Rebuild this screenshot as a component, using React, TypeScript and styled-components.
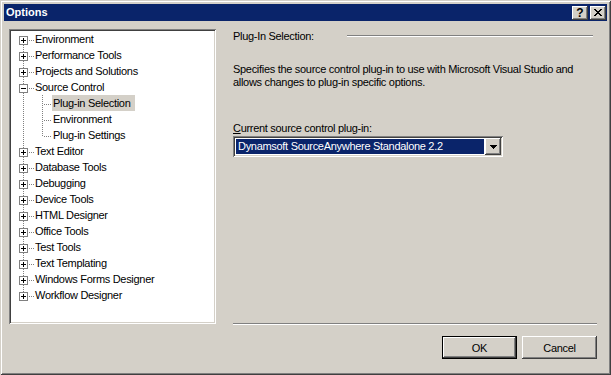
import * as React from "react";
import styled, { createGlobalStyle, css } from "styled-components";

const face = "#d4d0c8";
const shadow = "#808080";
const darkShadow = "#404040";
const highlight = "#ffffff";
const navy = "#0a246a";

const GlobalStyle = createGlobalStyle`
    html, body {
        margin: 0;
        padding: 0;
        background: ${face};
    }
    body {
        font-family: "Liberation Sans", Arial, sans-serif;
        font-size: 11px;
        letter-spacing: -0.3px;
        color: #000;
    }
    * {
        box-sizing: border-box;
    }
`;

// Classic 3D edges, drawn with inset shadows so they don't change the box size.
const raisedEdge = css`
    box-shadow: inset -1px -1px 0 ${darkShadow}, inset 1px 1px 0 ${highlight}, inset -2px -2px 0 ${shadow},
        inset 2px 2px 0 ${face};
`;

const sunkenEdge = css`
    box-shadow: inset 1px 1px 0 ${shadow}, inset -1px -1px 0 ${highlight}, inset 2px 2px 0 ${darkShadow},
        inset -2px -2px 0 ${face};
`;

const etchedRule = css`
    height: 2px;
    border-top: 1px solid ${shadow};
    border-bottom: 1px solid ${highlight};
`;

type TreeItem = {
    label: string;
    level: 0 | 1;
    expanded?: boolean;
    selected?: boolean;
};

const treeItems: TreeItem[] = [
    { label: "Environment", level: 0 },
    { label: "Performance Tools", level: 0 },
    { label: "Projects and Solutions", level: 0 },
    { label: "Source Control", level: 0, expanded: true },
    { label: "Plug-in Selection", level: 1, selected: true },
    { label: "Environment", level: 1 },
    { label: "Plug-in Settings", level: 1 },
    { label: "Text Editor", level: 0 },
    { label: "Database Tools", level: 0 },
    { label: "Debugging", level: 0 },
    { label: "Device Tools", level: 0 },
    { label: "HTML Designer", level: 0 },
    { label: "Office Tools", level: 0 },
    { label: "Test Tools", level: 0 },
    { label: "Text Templating", level: 0 },
    { label: "Windows Forms Designer", level: 0 },
    { label: "Workflow Designer", level: 0 },
];

const Window = styled.div`
    width: 611px;
    height: 375px;
    padding: 4px;
    background: ${face};
    display: flex;
    flex-direction: column;
    box-shadow: inset 1px 1px 0 ${face}, inset -1px -1px 0 ${darkShadow}, inset 2px 2px 0 ${highlight},
        inset -2px -2px 0 ${shadow};
`;

const TitleBar = styled.div`
    height: 17px;
    flex: none;
    display: flex;
    align-items: center;
    padding: 0 1px 0 2px;
    background: ${navy};
    color: #fff;
    font-weight: bold;
    font-size: 11px;
    letter-spacing: 0;
`;

const TitleText = styled.div`
    flex: 1;
    line-height: 17px;
`;

const CaptionButton = styled.div`
    width: 16px;
    height: 14px;
    margin-left: 2px;
    background: ${face};
    color: #000;
    display: flex;
    align-items: center;
    justify-content: center;
    font-size: 12px;
    font-weight: bold;
    line-height: 14px;
    ${raisedEdge}
`;

const Body = styled.div`
    display: grid;
    grid-template-columns: 207px 1fr;
    grid-template-rows: 295px auto;
    column-gap: 17px;
    row-gap: 12px;
    padding: 8px 10px 0 5px;
`;

const Tree = styled.div`
    background: #fff;
    padding: 2px;
    overflow: hidden;
    ${sunkenEdge}
`;

const TreeRow = styled.div`
    height: 16px;
    display: flex;
    align-items: stretch;
`;

const TreeGlyph = styled.svg`
    display: block;
    flex: none;
    shape-rendering: crispEdges;
`;

const TreeLabel = styled.span<{ $selected?: boolean }>`
    padding: 0 5px 0 1px;
    line-height: 16px;
    white-space: nowrap;
    background: ${(p) => (p.$selected ? face : "transparent")};
`;

const Page = styled.div`
    display: flex;
    flex-direction: column;
`;

const SectionHeader = styled.div`
    height: 14px;
    display: flex;
    align-items: center;
`;

const SectionTitle = styled.div`
    width: 114px;
    flex: none;
    line-height: 14px;
`;

const SectionRule = styled.div`
    flex: 1;
    margin-right: 4px;
    ${etchedRule}
`;

const Description = styled.div`
    margin-top: 20px;
    line-height: 13px;
    white-space: nowrap;
`;

const FieldLabel = styled.div`
    margin-top: 33px;
    line-height: 13px;
`;

const Combo = styled.div`
    margin-top: 1px;
    width: 270px;
    height: 21px;
    padding: 2px;
    background: #fff;
    display: flex;
    ${sunkenEdge}
`;

const ComboValue = styled.div`
    flex: 1;
    margin: 1px;
    padding-left: 2px;
    background: ${navy};
    color: #fff;
    line-height: 15px;
    white-space: nowrap;
    overflow: hidden;
`;

const ComboButton = styled.div`
    width: 16px;
    flex: none;
    background: ${face};
    display: flex;
    align-items: center;
    justify-content: center;
    ${raisedEdge}
`;

const BottomRule = styled.div`
    margin-top: auto;
    margin-bottom: -1px;
    ${etchedRule}
`;

const ButtonRow = styled.div`
    grid-column: 2;
    display: flex;
    justify-content: flex-end;
    gap: 5px;
`;

const PushButton = styled.div<{ $default?: boolean }>`
    width: 75px;
    height: 23px;
    background: ${face};
    display: flex;
    align-items: center;
    justify-content: center;
    border: ${(p) => (p.$default ? "1px solid #000" : "none")};
    ${raisedEdge}
`;

const Mnemonic = styled.span`
    text-decoration: underline;
`;

const dotsV = (x: number, from: number, to: number) => {
    const result: React.ReactElement[] = [];
    for (let y = from; y <= to; y += 2) {
        result.push(<rect key={`v${x}-${y}`} x={x} y={y} width={1} height={1} />);
    }
    return result;
};

const dotsH = (y: number, from: number, to: number) => {
    const result: React.ReactElement[] = [];
    for (let x = from; x <= to; x += 2) {
        result.push(<rect key={`h${y}-${x}`} x={x} y={y} width={1} height={1} />);
    }
    return result;
};

const RootGlyph = ({ first, last, expanded }: { first: boolean; last: boolean; expanded?: boolean }) => (
    <TreeGlyph width={23} height={16} viewBox="0 0 23 16">
        <g fill={shadow}>
            {!first && dotsV(12, 0, 4)}
            {!last && dotsV(12, 14, 15)}
            {dotsH(9, 18, 22)}
        </g>
        <rect x={8.5} y={5.5} width={8} height={8} fill="#fff" stroke={shadow} />
        <rect x={10} y={9} width={5} height={1} fill="#000" />
        {!expanded && <rect x={12} y={7} width={1} height={5} fill="#000" />}
    </TreeGlyph>
);

const ChildGlyph = ({ lastChild }: { lastChild: boolean }) => (
    <TreeGlyph width={41} height={16} viewBox="0 0 41 16">
        <g fill={shadow}>
            {dotsV(12, 0, 15)}
            {dotsV(31, 0, lastChild ? 9 : 15)}
            {dotsH(9, 33, 39)}
        </g>
    </TreeGlyph>
);

const CloseGlyph = () => {
    const rows = ["xx....xx", ".xx..xx.", "..xxxx..", "...xx...", "..xxxx..", ".xx..xx.", "xx....xx"];
    return (
        <svg width={8} height={7} viewBox="0 0 8 7" shapeRendering="crispEdges">
            {rows.flatMap((row, y) =>
                row.split("").map((c, x) => (c === "x" ? <rect key={`${x}-${y}`} x={x} y={y} width={1} height={1} /> : null))
            )}
        </svg>
    );
};

const DropArrow = () => (
    <svg width={7} height={4} viewBox="0 0 7 4" shapeRendering="crispEdges">
        <rect x={0} y={0} width={7} height={1} />
        <rect x={1} y={1} width={5} height={1} />
        <rect x={2} y={2} width={3} height={1} />
        <rect x={3} y={3} width={1} height={1} />
    </svg>
);

const OptionsTree = () => {
    const lastIndex = treeItems.length - 1;
    return (
        <Tree>
            {treeItems.map((item, i) => {
                const next = treeItems[i + 1];
                return (
                    <TreeRow key={i}>
                        {item.level === 0 ? (
                            <RootGlyph first={i === 0} last={i === lastIndex} expanded={item.expanded} />
                        ) : (
                            <ChildGlyph lastChild={!next || next.level !== 1} />
                        )}
                        <TreeLabel $selected={item.selected}>{item.label}</TreeLabel>
                    </TreeRow>
                );
            })}
        </Tree>
    );
};

const App = () => (
    <>
        <GlobalStyle />
        <Window>
            <TitleBar>
                <TitleText>Options</TitleText>
                <CaptionButton>?</CaptionButton>
                <CaptionButton>
                    <CloseGlyph />
                </CaptionButton>
            </TitleBar>
            <Body>
                <OptionsTree />
                <Page>
                    <SectionHeader>
                        <SectionTitle>Plug-In Selection:</SectionTitle>
                        <SectionRule />
                    </SectionHeader>
                    <Description>
                        Specifies the source control plug-in to use with Microsoft Visual Studio and
                        <br />
                        allows changes to plug-in specific options.
                    </Description>
                    <FieldLabel>
                        <Mnemonic>C</Mnemonic>urrent source control plug-in:
                    </FieldLabel>
                    <Combo>
                        <ComboValue>Dynamsoft SourceAnywhere Standalone 2.2</ComboValue>
                        <ComboButton>
                            <DropArrow />
                        </ComboButton>
                    </Combo>
                    <BottomRule />
                </Page>
                <ButtonRow>
                    <PushButton $default>OK</PushButton>
                    <PushButton>Cancel</PushButton>
                </ButtonRow>
            </Body>
        </Window>
    </>
);

export default App;
